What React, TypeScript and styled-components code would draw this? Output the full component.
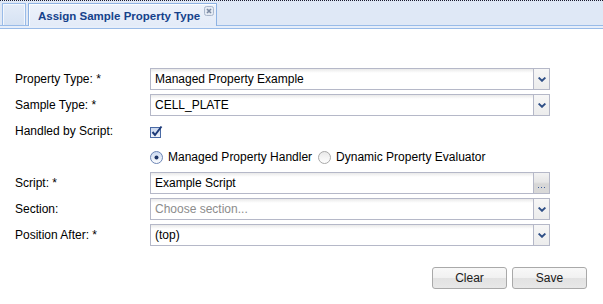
import React from "react";
import styled, { createGlobalStyle } from "styled-components";

const Global = createGlobalStyle`
  html, body { margin: 0; padding: 0; background: #fff; }
  body { font-family: "Liberation Sans", Arial, sans-serif; font-size: 12px; color: #000; }
`;

const Page = styled.div`
  width: 603px;
  height: 304px;
  overflow: hidden;
`;

const TabStrip = styled.div`
  display: flex;
  align-items: flex-end;
  height: 24px;
  padding-left: 2px;
  gap: 2px;
  background: #dfe8f6;
  border-top: 1px dotted #1a1a2e;
  border-bottom: 1px solid #99bbe8;
`;

const StubTab = styled.div`
  width: 22px;
  height: 21px;
  margin-bottom: -1px;
  border: 1px solid #99bbe8;
  background: linear-gradient(#e4ecf8, #d6e2f3);
  box-shadow: inset 1px 1px 0 #f3f7fd, inset -1px 0 0 #f3f7fd;
`;

const ActiveTab = styled.div`
  position: relative;
  z-index: 1;
  display: flex;
  align-items: center;
  width: 178px;
  height: 22px;
  margin-bottom: -1px;
  padding-left: 9px;
  box-sizing: content-box;
  border: 1px solid #8db2e3;
  border-bottom: none;
  background: linear-gradient(#edf2fb, #e3ebf8);
  box-shadow: inset 1px 1px 0 #fbfdff;
`;

const TabTitle = styled.span`
  font-family: "Liberation Sans", Arial, sans-serif;
  font-weight: bold;
  font-size: 11.5px;
  color: #15428b;
  padding-top: 1px;
`;

const CloseBox = styled.span`
  position: absolute;
  left: 175px;
  top: 2px;
  width: 10px;
  height: 10px;
  display: flex;
`;

const Band = styled.div`
  height: 2px;
  background: #e6eefa;
  border-bottom: 1px solid #99bbe8;
`;

const Form = styled.div`
  display: flex;
  flex-direction: column;
  gap: 4px;
  padding: 39px 0 0 15px;
`;

const Row = styled.div`
  display: grid;
  grid-template-columns: 135px 400px;
  align-items: center;
  height: 22px;
`;

const Label = styled.div`
  font-size: 12px;
  color: #000;
  white-space: nowrap;
`;

const Field = styled.div`
  display: flex;
  height: 22px;
  box-sizing: border-box;
  border: 1px solid #b5b8c8;
  background: linear-gradient(#e9e9e9, #ffffff 4px);
`;

const FieldText = styled.div<{ $placeholder?: boolean }>`
  flex: 1;
  display: flex;
  align-items: center;
  padding-left: 4px;
  font-size: 12px;
  color: ${(p) => (p.$placeholder ? "#8c8c8c" : "#000")};
`;

const Trigger = styled.div<{ $ellipsis?: boolean }>`
  width: 16px;
  border-left: 1px solid #b5b8c8;
  display: flex;
  align-items: ${(p) => (p.$ellipsis ? "flex-end" : "center")};
  justify-content: center;
  padding-bottom: ${(p) => (p.$ellipsis ? "5px" : "0")};
  box-sizing: border-box;
  background: ${(p) =>
    p.$ellipsis
      ? "linear-gradient(#f2f2f2, #e6e6e6 45%, #d6d6d6 55%, #d9d9d9)"
      : "linear-gradient(#f6f6f6, #ececec)"};
`;

const Dots = styled.span`
  display: flex;
  gap: 2px;
`;

const Dot = styled.span`
  width: 1px;
  height: 1px;
  background: #3f5f9a;
`;

const Options = styled.div`
  display: flex;
  align-items: center;
  gap: 6px;
`;

const Option = styled.label`
  display: flex;
  align-items: center;
  gap: 5px;
  font-size: 12px;
`;

const ButtonBar = styled.div`
  display: flex;
  justify-content: flex-end;
  gap: 5px;
  padding: 21px 16px 0 0;
`;

const Button = styled.div`
  width: 75px;
  height: 22px;
  box-sizing: border-box;
  border: 1px solid #a9a9a9;
  border-radius: 3px;
  display: flex;
  align-items: center;
  justify-content: center;
  font-family: "Liberation Sans", Arial, sans-serif;
  font-size: 12px;
  color: #1a1a1a;
  background: linear-gradient(#f8f8f8, #f1f1f1 50%, #e2e2e2 52%, #e8e8e8);
`;

const Chevron = () => (
  <svg width="8" height="5" viewBox="0 0 8 5">
    <path d="M0.6 0.6 L4 3.8 L7.4 0.6" fill="none" stroke="#2f4f86" strokeWidth="1.9" />
  </svg>
);

const CheckIcon = () => (
  <svg width="13" height="13" viewBox="0 0 13 13">
    <defs>
      <linearGradient id="cbg" x1="0" y1="0" x2="0" y2="1">
        <stop offset="0" stopColor="#c8d6ee" />
        <stop offset="1" stopColor="#f4f7fc" />
      </linearGradient>
    </defs>
    <rect x="0.5" y="2.5" width="10" height="10" fill="url(#cbg)" stroke="#4a6aa5" />
    <path d="M2.5 7 L5 10 L11.5 1.5" fill="none" stroke="#1d3a78" strokeWidth="2" />
  </svg>
);

const RadioIcon = ({ checked }: { checked?: boolean }) => (
  <svg width="13" height="13" viewBox="0 0 13 13">
    <defs>
      <linearGradient id={checked ? "rgOn" : "rgOff"} x1="0" y1="0" x2="0" y2="1">
        <stop offset="0" stopColor={checked ? "#c9d8f0" : "#e8e8e8"} />
        <stop offset="1" stopColor="#ffffff" />
      </linearGradient>
    </defs>
    <circle cx="6.5" cy="6.5" r="6" fill={`url(#${checked ? "rgOn" : "rgOff"})`} stroke={checked ? "#6d86b5" : "#a8a8a8"} />
    {checked && <circle cx="6.5" cy="6.5" r="2" fill="#1e3566" />}
  </svg>
);

const CloseIcon = () => (
  <svg width="10" height="10" viewBox="0 0 10 10">
    <rect x="0.5" y="0.5" width="9" height="9" rx="2" fill="#e4eaf3" stroke="#a9b7cc" />
    <path d="M3 3 L7 7 M7 3 L3 7" stroke="#7b8aa3" strokeWidth="1.6" />
  </svg>
);

type FieldProps = { value: string; placeholder?: boolean; ellipsis?: boolean };

const Combo = ({ value, placeholder, ellipsis }: FieldProps) => (
  <Field>
    <FieldText $placeholder={placeholder}>{value}</FieldText>
    <Trigger $ellipsis={ellipsis}>
      {ellipsis ? (
        <Dots>
          <Dot />
          <Dot />
          <Dot />
        </Dots>
      ) : (
        <Chevron />
      )}
    </Trigger>
  </Field>
);

export default function App() {
  return (
    <Page>
      <Global />
      <TabStrip>
        <StubTab />
        <ActiveTab>
          <TabTitle>Assign Sample Property Type</TabTitle>
          <CloseBox>
            <CloseIcon />
          </CloseBox>
        </ActiveTab>
      </TabStrip>
      <Band />
      <Form>
        <Row>
          <Label>Property Type: *</Label>
          <Combo value="Managed Property Example" />
        </Row>
        <Row>
          <Label>Sample Type: *</Label>
          <Combo value="CELL_PLATE" />
        </Row>
        <Row>
          <Label>Handled by Script:</Label>
          <Options>
            <CheckIcon />
          </Options>
        </Row>
        <Row>
          <Label />
          <Options>
            <Option>
              <RadioIcon checked />
              Managed Property Handler
            </Option>
            <Option>
              <RadioIcon />
              Dynamic Property Evaluator
            </Option>
          </Options>
        </Row>
        <Row>
          <Label>Script: *</Label>
          <Combo value="Example Script" ellipsis />
        </Row>
        <Row>
          <Label>Section:</Label>
          <Combo value="Choose section..." placeholder />
        </Row>
        <Row>
          <Label>Position After: *</Label>
          <Combo value="(top)" />
        </Row>
      </Form>
      <ButtonBar>
        <Button>Clear</Button>
        <Button>Save</Button>
      </ButtonBar>
    </Page>
  );
}
